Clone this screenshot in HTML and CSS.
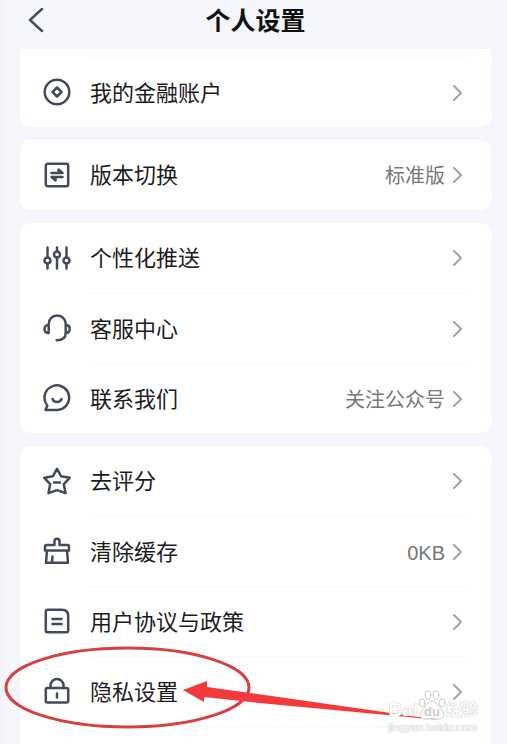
FILE: index.html
```html
<!DOCTYPE html>
<html lang="zh-CN">
<head>
    <meta charset="UTF-8">
    <meta name="viewport" content="width=device-width, initial-scale=1.0">
    <title>个人设置</title>
    <link rel="stylesheet" href="styles.css">
</head>
<body>
    <svg class="symbols" aria-hidden="true">
        <symbol id="chevron" viewBox="0 0 12 18">
            <path d="M3 2l7 7-7 7"/>
        </symbol>
    </svg>

    <header class="header">
        <button class="back" type="button" aria-label="返回">
            <svg viewBox="0 0 16 26" width="16" height="26"><path d="M14 1L2 12l12 11"/></svg>
        </button>
        <h1>个人设置</h1>
    </header>

    <main class="settings">
        <section class="card card-first">
            <a class="row" href="#account">
                <svg class="icon" viewBox="0 0 28 28"><circle cx="14" cy="14" r="12.3"/><path d="M14 9.5l4.500 4.500-4.500 4.500L9.500 14z"/></svg>
                <span class="content"><span class="label">我的金融账户</span><svg class="chevron"><use href="#chevron"/></svg></span>
            </a>
        </section>

        <section class="card">
            <a class="row" href="#version">
                <svg class="icon" viewBox="0 0 28 28"><rect x="2.8" y="2.8" width="22.4" height="22.4" rx="2"/><path d="M8.500 12h11l-4-3.500V12M19.500 16h-11l4 3.500V16"/></svg>
                <span class="content"><span class="label">版本切换</span><span class="value">标准版</span><svg class="chevron"><use href="#chevron"/></svg></span>
            </a>
        </section>

        <section class="card">
            <a class="row" href="#push">
                <svg class="icon" viewBox="0 0 28 28"><path d="M4.500 3.500v10M4.500 19.500v5M14 3.500v4M14 13.500v11M23.500 3.500v10M23.500 19.500v5"/><circle cx="4.500" cy="16.500" r="3"/><circle cx="14" cy="10.500" r="3"/><circle cx="23.500" cy="16.500" r="3"/></svg>
                <span class="content"><span class="label">个性化推送</span><svg class="chevron"><use href="#chevron"/></svg></span>
            </a>
            <a class="row" href="#service">
                <svg class="icon" viewBox="0 0 28 28"><path d="M5.700 19V10a8.500 8.500 0 0 1 17 0V19c0 4-2.700 7.200-9 7.200M5.700 11C3 11 1.500 12.500 1.500 15s1.500 4 4.200 4M22.700 11c2.700 0 4 1.500 4 4s-1.300 4-4 4"/></svg>
                <span class="content"><span class="label">客服中心</span><svg class="chevron"><use href="#chevron"/></svg></span>
            </a>
            <a class="row" href="#contact">
                <svg class="icon" viewBox="0 0 28 28"><path d="M2.500 26l1.800-4.500A12.300 12.300 0 1 1 14.300 26zM9.500 15c1.500 4 7.500 4 9 0"/></svg>
                <span class="content"><span class="label">联系我们</span><span class="value">关注公众号</span><svg class="chevron"><use href="#chevron"/></svg></span>
            </a>
        </section>

        <section class="card card-last">
            <a class="row" href="#rate">
                <svg class="icon" viewBox="0 0 28 28"><path d="M14 1.800l4 7.400 8.700 1.600-5.900 6.300 1.700 9-8.500-3-8.500 3 1.700-9-5.900-6.300L10 9.200zM11 15.500h6"/></svg>
                <span class="content"><span class="label">去评分</span><svg class="chevron"><use href="#chevron"/></svg></span>
            </a>
            <a class="row" href="#cache">
                <svg class="icon" viewBox="0 0 28 28"><path d="M2 13.500V9.500a1.500 1.500 0 0 1 1.500-1.500H11.500V4.300a2.500 2.500 0 0 1 5 0V8h8a1.500 1.500 0 0 1 1.500 1.500v4zM4 13.500L3 25.800h22l-1-12.300M9 25.500l.5-6"/></svg>
                <span class="content"><span class="label">清除缓存</span><span class="value">0KB</span><svg class="chevron"><use href="#chevron"/></svg></span>
            </a>
            <a class="row" href="#policy">
                <svg class="icon" viewBox="0 0 28 28"><path d="M4.500 2.800H19q6.200 0 6.200 6.200v14.500q0 1.700-1.700 1.700h-19q-1.700 0-1.700-1.700v-19q0-1.700 1.700-1.700zM9.500 12h9M9.500 17h9"/></svg>
                <span class="content"><span class="label">用户协议与政策</span><svg class="chevron"><use href="#chevron"/></svg></span>
            </a>
            <a class="row" href="#privacy">
                <svg class="icon" viewBox="0 0 28 28"><rect x="2.800" y="11" width="22.400" height="14.500" rx="1.500"/><path d="M7.500 11V8.500a6.500 6.500 0 0 1 13 0V11M14 16.500v4"/></svg>
                <span class="content"><span class="label">隐私设置</span><svg class="chevron"><use href="#chevron"/></svg></span>
            </a>
            <div class="row-end"></div>
        </section>
    </main>

    <svg class="marker" viewBox="0 0 440 84" aria-hidden="true">
        <ellipse cx="127.500" cy="41.500" rx="121.500" ry="39.500"/>
        <path d="M183 44l24-9v6l43 6 190 27-190-18-46-5v5z"/>
    </svg>

    <div class="watermark">
        <div class="brand">
            <span class="brand-latin">Bai</span>
            <svg class="paw" viewBox="0 0 28 30" width="28" height="30">
                <ellipse cx="4" cy="13" rx="3" ry="4"/><ellipse cx="10" cy="5" rx="3" ry="4"/><ellipse cx="18" cy="5" rx="3" ry="4"/><ellipse cx="24" cy="13" rx="3" ry="4"/>
                <path d="M14 11c5 0 6 6 10 9 4 4 1 10-4 9q-6-1-12 0c-5 1-8-5-4-9 4-3 5-9 10-9z"/>
                <text x="14" y="26">du</text>
            </svg>
            <span class="brand-cn">经验</span>
        </div>
        <div class="domain">jingyan.baidu.com</div>
    </div>
</body>
</html>
```
FILE: styles.css
```css
* {
    box-sizing: border-box;
}
body {
    margin: 0;
    min-height: 100vh;
    display: flex;
    flex-direction: column;
    position: relative;
    background: #f5f6fb;
    border-left: 4px solid #f3f3f5;
    color: #1c1c1e;
    font-family: "Liberation Sans", "Noto Sans CJK SC", sans-serif;
}
.symbols {
    display: none;
}
svg {
    fill: none;
    stroke-linecap: round;
    stroke-linejoin: round;
}
.header {
    display: grid;
    grid-template-columns: 48px 1fr 48px;
    align-items: center;
    height: 49px;
    padding: 0 0 8px;
}
.header h1 {
    margin: 0;
    font-size: 25px;
    line-height: 40px;
    font-weight: 700;
    text-align: center;
    color: #111;
}
.back {
    display: flex;
    padding: 0 0 0 24px;
    border: 0;
    background: none;
    stroke: #4a4e5a;
    stroke-width: 2.5;
}
.settings {
    flex: 1;
    display: flex;
    flex-direction: column;
    gap: 13px;
    padding: 0 16px;
}
.card {
    background: #fff;
    border-radius: 10px;
}
.card-first {
    padding-top: 8px;
    border-radius: 0 0 10px 10px;
}
.card-last {
    flex: 1;
    border-radius: 10px 10px 0 0;
}
.row {
    display: flex;
    align-items: center;
    gap: 19px;
    height: 70px;
    padding: 0 24px 0 23px;
    color: inherit;
    text-decoration: none;
}
.icon {
    width: 28px;
    height: 28px;
    stroke: #434a5a;
    stroke-width: 2.5;
}
.content {
    flex: 1;
    display: flex;
    align-items: center;
    gap: 6px;
    height: 70px;
}
.row + .row .content,
.card-first .content {
    border-top: 1px solid #f8f8fa;
}
.label {
    flex: 1;
    padding-top: 2px;
    font-size: 22px;
    line-height: 32px;
}
.value {
    padding-top: 2px;
    font-size: 20px;
    line-height: 32px;
    color: #777;
}
.chevron {
    width: 12px;
    height: 18px;
    margin-right: 4px;
    stroke: #a4a4a8;
    stroke-width: 2;
}
.row-end {
    height: 1px;
    margin: 0 24px 0 70px;
    background: #f8f8fa;
}
.marker {
    position: absolute;
    left: -4px;
    bottom: 14px;
    width: 440px;
    height: 84px;
}
.marker ellipse {
    stroke: #d6403f;
    stroke-width: 3;
}
.marker path {
    fill: #f5393b;
}
.watermark {
    position: absolute;
    right: 29px;
    bottom: 10px;
    color: #fff;
    text-shadow: 0 0 1px #bbb, 0 0 1px #bbb;
}
.brand {
    display: flex;
    align-items: flex-end;
    font-weight: 700;
    line-height: 20px;
}
.brand-latin {
    font-size: 19px;
}
.brand-cn {
    font-size: 16px;
}
.paw {
    fill: #fff;
    stroke: #ccc;
    stroke-width: 1;
}
.paw text {
    fill: #ccc;
    stroke: none;
    font-size: 13px;
    text-anchor: middle;
    text-shadow: none;
}
.domain {
    font-size: 11px;
    line-height: 14px;
}
```
